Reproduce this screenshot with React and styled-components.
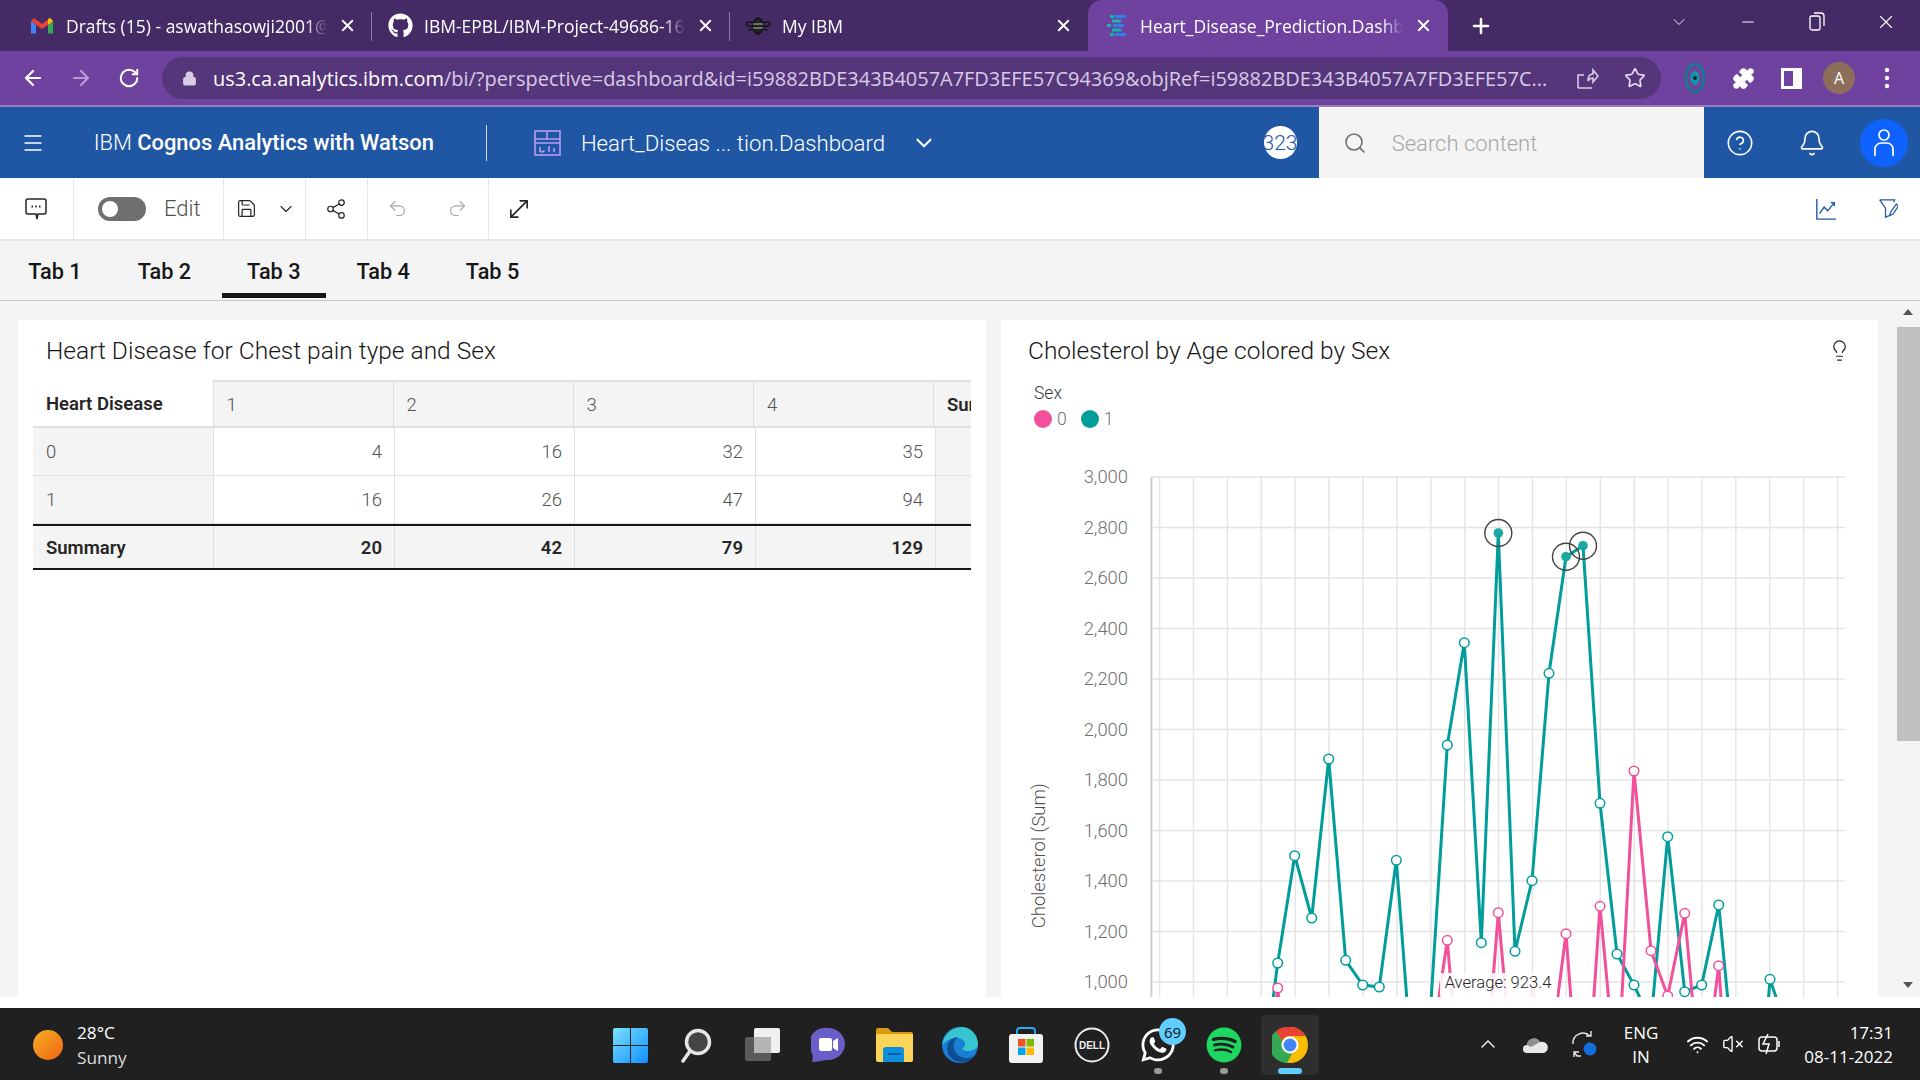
import React from "react";
import styled, { createGlobalStyle } from "styled-components";
import {
  ArrowLeft,
  ArrowRight,
  Bell,
  ChevronDown,
  ChevronUp,
  CircleHelp,
  Lightbulb,
  Lock,
  Menu,
  Minus,
  MoveDiagonal,
  Plus,
  Puzzle,
  Redo2,
  RotateCw,
  Save,
  Search,
  Share2,
  Star,
  Undo2,
  VolumeX,
  Wifi,
  X,
} from "lucide-react";
import { FaGithub, FaSpotify, FaWhatsapp } from "react-icons/fa";

const plex = `Roboto, "Noto Sans", sans-serif`;
const segoe = `"Open Sans", "Noto Sans", sans-serif`;

const GlobalStyle = createGlobalStyle`
  html, body { margin: 0; padding: 0; height: 100%; overflow: hidden; background: #fff; }
  * { box-sizing: border-box; }
`;

const Page = styled.div`
  width: 1920px;
  height: 1080px;
  display: flex;
  flex-direction: column;
  overflow: hidden;
  font-family: ${plex};
`;

/* browser chrome */
const TabStrip = styled.div`
  height: 51px;
  flex: none;
  background: #452b66;
  display: flex;
  padding-left: 14px;
  color: #fff;
  font-family: ${segoe};
`;

const BrowserTab = styled.div`
  position: relative;
  width: ${(p) => (p.$active ? "359.5px" : "358px")};
  display: flex;
  align-items: center;
  padding: 0 15px 0 15px;
  gap: 11px;
  font-size: 17.5px;
  background: ${(p) => (p.$active ? "#6f42a0" : "transparent")};
  border-radius: ${(p) => (p.$active ? "14px 14px 0 0" : "0")};
  &::after {
    content: "";
    display: ${(p) => (p.$sep ? "block" : "none")};
    position: absolute;
    right: 0;
    top: 12px;
    height: 29px;
    width: 1px;
    background: #8a77a3;
  }
`;

const TabIcon = styled.span`
  width: 26px;
  flex: none;
  display: flex;
  justify-content: center;
`;

const TabLabel = styled.span`
  flex: 1;
  white-space: nowrap;
  overflow: hidden;
  -webkit-mask-image: linear-gradient(to right, #000 92%, transparent);
  mask-image: linear-gradient(to right, #000 92%, transparent);
`;

const NewTab = styled.span`
  width: 66px;
  display: flex;
  align-items: center;
  justify-content: center;
`;

const WindowControls = styled.div`
  margin-left: auto;
  display: flex;
  align-items: flex-start;
`;

const WindowButton = styled.span`
  width: 69px;
  height: 44px;
  display: flex;
  align-items: center;
  justify-content: center;
`;

const AddressBar = styled.div`
  height: 56px;
  flex: none;
  background: #6f42a0;
  border-bottom: 2px solid #9a7cc0;
  display: flex;
  align-items: center;
  padding-left: 8.5px;
  color: #fff;
  font-family: ${segoe};
`;

const Slot = styled.span`
  width: ${(p) => p.$w || 48}px;
  flex: none;
  display: flex;
  align-items: center;
  justify-content: center;
  color: ${(p) => p.$color || "inherit"};
`;

const Omnibox = styled.div`
  width: 1499px;
  height: 42px;
  margin: 0 10px 0 9.5px;
  flex: none;
  border-radius: 21px;
  background: #56367a;
  display: flex;
  align-items: center;
  padding: 0 2px 0 3px;
`;

const Url = styled.div`
  flex: 1;
  font-size: 19.96px;
  white-space: nowrap;
  overflow: hidden;
  color: #d8cbe6;
  b {
    font-weight: 400;
    color: #fff;
  }
`;

const Avatar = styled.span`
  width: 32px;
  height: 32px;
  border-radius: 50%;
  background: #8d6e5a;
  font-size: 16px;
  display: flex;
  align-items: center;
  justify-content: center;
`;

/* cognos header */
const AppHeader = styled.header`
  height: 71px;
  flex: none;
  background: #1f57a4;
  color: #fff;
  display: flex;
  align-items: center;
`;

const Brand = styled.div`
  margin-left: 27.7px;
  font-size: 21.9px;
  font-weight: 300;
  white-space: nowrap;
  b {
    font-weight: 500;
  }
`;

const HeaderDivider = styled.span`
  width: 1px;
  height: 36px;
  margin: 0 47px 0 52px;
  background: #d0dcec;
`;

const DashTitle = styled.div`
  margin-left: 20px;
  font-size: 22.2px;
  font-weight: 300;
  white-space: nowrap;
`;

const CountBadge = styled.span`
  width: 33px;
  height: 33px;
  margin-left: auto;
  border-radius: 50%;
  background: #fff;
  color: #1f57a4;
  font-size: 21px;
  font-weight: 300;
  overflow: hidden;
  display: flex;
  align-items: center;
  justify-content: center;
`;

const SearchBox = styled.div`
  width: 385px;
  height: 71px;
  margin-left: 22.5px;
  padding-top: 1px;
  background: #f4f4f4;
  color: #a8a8a8;
  font-size: 22px;
  font-weight: 300;
  display: flex;
  align-items: center;
`;

const SearchGlass = styled(Slot)`
  margin-right: 0.7px;
  color: #6f6f6f;
`;

const UserCircle = styled.span`
  width: 48px;
  height: 48px;
  border-radius: 50%;
  background: #0f62fe;
  display: flex;
  align-items: center;
  justify-content: center;
`;

/* toolbar */
const Toolbar = styled.div`
  height: 63px;
  flex: none;
  background: #fff;
  border-bottom: 2px solid #e6e6e6;
  display: flex;
  color: #262626;
`;

const ToolSection = styled.div`
  width: ${(p) => p.$w}px;
  flex: none;
  display: flex;
  align-items: center;
  justify-content: ${(p) => p.$justify || "center"};
  border-right: ${(p) => (p.$open ? "none" : "1px solid #e6e6e6")};
  padding-left: ${(p) => p.$pad || 0}px;
`;

const Toggle = styled.span`
  width: 48px;
  height: 24px;
  border-radius: 12px;
  background: #6f6f6f;
  padding: 4px;
  display: flex;
  &::before {
    content: "";
    width: 16px;
    height: 16px;
    border-radius: 50%;
    background: #fff;
  }
`;

const EditLabel = styled.span`
  margin-left: 18px;
  font-size: 22px;
  font-weight: 300;
  color: #525252;
`;

const ToolRight = styled.div`
  margin-left: auto;
  padding-right: 1px;
  display: flex;
  color: #1f57a4;
`;

/* dashboard tabs */
const TabsBar = styled.nav`
  height: 60px;
  flex: none;
  background: #f4f4f4;
  border-bottom: 1px solid #c6c6c6;
  padding-left: 3px;
  display: flex;
  gap: 5.4px;
`;

const DashTab = styled.span`
  width: 104px;
  height: 57px;
  padding-top: 9px;
  font-size: 21.7px;
  font-weight: 500;
  color: #161616;
  display: flex;
  align-items: center;
  justify-content: center;
  border-bottom: 5px solid ${(p) => (p.$active ? "#161616" : "transparent")};
`;

/* content */
const Content = styled.main`
  flex: 1;
  min-height: 0;
  background: #f4f4f4;
  display: flex;
  padding: 19px 0 0 18px;
  gap: 15px;
  overflow: hidden;
`;

const Panel = styled.section`
  width: ${(p) => p.$w}px;
  flex: none;
  background: #fff;
  overflow: hidden;
  display: flex;
  flex-direction: column;
`;

const PanelHead = styled.div`
  height: 60px;
  flex: none;
  padding: 0 27px 0 ${(p) => p.$left}px;
  display: flex;
  align-items: center;
  justify-content: space-between;
`;

const PanelTitle = styled.h2`
  margin: 0;
  font-size: 24.5px;
  font-weight: 300;
  color: #161616;
`;

const PivotTable = styled.div`
  margin: 0 15px;
  overflow: hidden;
`;

const PivotRow = styled.div`
  display: grid;
  grid-template-columns: ${(p) => p.$cols};
  height: ${(p) => p.$h}px;
  width: 1100px;
  border-top: ${(p) => p.$top || "none"};
  border-bottom: ${(p) => p.$bottom || "none"};
`;

const Cell = styled.div`
  display: flex;
  align-items: center;
  justify-content: ${(p) => (p.$num ? "flex-end" : "flex-start")};
  padding: 1px 12px 0 13px;
  font-size: 18.5px;
  font-weight: ${(p) => (p.$bold ? 600 : 300)};
  color: ${(p) => (p.$bold ? "#262626" : "#525252")};
  background: ${(p) => (p.$shade ? "#f4f4f4" : "#fff")};
  border-right: 1px solid #e0e0e0;
`;

const HeadCell = styled(Cell)`
  padding-top: 2px;
  background: ${(p) => (p.$plain ? "#fff" : "#f4f4f4")};
  border-top: ${(p) => (p.$plain ? "none" : "2px solid #e0e0e0")};
  border-bottom: 2px solid #e0e0e0;
`;

const Legend = styled.div`
  height: 70px;
  flex: none;
  padding: 3px 0 0 33px;
  font-size: 17.5px;
  line-height: 20px;
  font-weight: 300;
  color: #393939;
`;

const LegendItems = styled.div`
  margin-top: 6px;
  display: flex;
  align-items: center;
  gap: 5px;
  color: #6f6f6f;
`;

const LegendDot = styled.span`
  width: 18px;
  height: 18px;
  border-radius: 50%;
  background: ${(p) => p.$color};
  margin-left: ${(p) => p.$gap || 0}px;
`;

const ChartSvg = styled.svg`
  display: block;
  flex: none;
`;

const Scrollbar = styled.div`
  margin-left: 4px;
  width: 23px;
  flex: none;
  position: relative;
  margin-top: -19px;
  padding-top: 26px;
  display: flex;
  flex-direction: column;
  align-items: stretch;
`;

const ScrollThumb = styled.div`
  height: 414px;
  background: #c0c0c0;
`;

const ScrollArrow = styled.span`
  position: absolute;
  left: 6px;
  ${(p) => (p.$up ? "top: 8px;" : "bottom: 9px;")}
  border-left: 5.5px solid transparent;
  border-right: 5.5px solid transparent;
  ${(p) => (p.$up ? "border-bottom" : "border-top")}: 6px solid #555;
`;

const WhiteBand = styled.div`
  height: 11px;
  flex: none;
  background: #fff;
`;

/* windows taskbar */
const Taskbar = styled.footer`
  height: 72px;
  flex: none;
  background: #202020;
  color: #fff;
  display: grid;
  grid-template-columns: 1fr auto 1fr;
  align-items: center;
  font-family: ${segoe};
`;

const Weather = styled.div`
  display: flex;
  align-items: center;
  padding: 2px 0 0 33px;
  gap: 14px;
`;

const Sun = styled.span`
  width: 30px;
  height: 30px;
  border-radius: 50%;
  background: linear-gradient(135deg, #f5b025, #f0640f);
`;

const WeatherText = styled.div`
  font-size: 17.2px;
  line-height: 25px;
  color: #ddd;
  strong {
    display: block;
    font-weight: 400;
    color: #fff;
  }
`;

const TaskIcons = styled.div`
  display: flex;
`;

const TaskIcon = styled.span`
  position: relative;
  width: 66px;
  height: 72px;
  padding-top: 2px;
  display: flex;
  align-items: center;
  justify-content: center;
  &::before {
    content: "";
    display: ${(p) => (p.$current ? "block" : "none")};
    position: absolute;
    left: 4px;
    right: 4px;
    top: 7px;
    bottom: 5px;
    border-radius: 5px;
    background: #2e2e2e;
  }
  svg {
    position: relative;
  }
`;

const RunDot = styled.span`
  position: absolute;
  bottom: 6px;
  left: 50%;
  transform: translateX(-50%);
  width: ${(p) => (p.$current ? 24 : 8)}px;
  height: 6px;
  border-radius: 3px;
  background: ${(p) => (p.$current ? "#60cdff" : "#9a9a9a")};
`;

const UnreadBadge = styled.span`
  position: absolute;
  top: 10px;
  right: 5px;
  width: 27px;
  height: 27px;
  border-radius: 50%;
  background: #60cdff;
  color: #111;
  font-size: 15px;
  display: flex;
  align-items: center;
  justify-content: center;
`;

const Tray = styled.div`
  display: flex;
  align-items: center;
  justify-content: flex-end;
  padding-right: 27px;
`;

const TwoLines = styled.div`
  font-size: 17px;
  line-height: 24px;
  padding-top: 1px;
  text-align: ${(p) => p.$align};
  margin: ${(p) => p.$margin};
`;

const axisValues = [3000, 2800, 2600, 2400, 2200, 2000, 1800, 1600, 1400, 1200, 1000];
const yOf = (v) => 477 + (3000 - v) * 0.2525;
const vLines = Array.from({ length: 21 }, (_, i) => 1159.6 + i * 33.9);

const teal = [
  [1260.7, 1094], [1277.7, 963], [1294.7, 855.7], [1311.7, 918], [1328.7, 759],
  [1345.7, 960.3], [1362.7, 985], [1379.3, 987], [1396.3, 860.3], [1413.4, 1085],
  [1430.4, 1011], [1447.3, 745], [1464.3, 642.7], [1481.3, 942.7], [1498.3, 533],
  [1515, 951.3], [1532, 880.7], [1549, 673.3], [1566, 556.7], [1583, 545.7],
  [1600, 803.3], [1617, 954], [1634, 985], [1651, 1022], [1667.7, 836.7],
  [1684.7, 991.7], [1701.7, 985], [1718.7, 905], [1735.7, 1080], [1752.7, 1200],
  [1770, 979.3], [1787, 1030],
];

const pink = [
  [1260.7, 1150], [1277.7, 988], [1294.7, 1150], [1430.3, 1056], [1447.3, 940.3],
  [1464.3, 1146], [1481.3, 1130], [1498.3, 912.7], [1515.3, 1103], [1532, 985],
  [1549, 1065], [1566, 933.7], [1583, 1158], [1600, 906.3], [1617, 1088],
  [1634, 771], [1651, 950.7], [1667.7, 996], [1684.7, 913.3], [1701.7, 1101],
  [1718.7, 965.7], [1735.7, 1200],
];

const hotspots = [1498.3, 1566, 1583];
const TEAL = "#009d9a";
const PINK = "#f1509a";

const pts = (list) => list.map((p) => p.join(",")).join(" ");

const CholesterolChart = () => (
  <ChartSvg width="877" height="547" viewBox="1001 450 877 547">
    {axisValues.map((v) => (
      <g key={v}>
        <line x1="1151" x2="1845" y1={yOf(v)} y2={yOf(v)} stroke="#e4e4e4" strokeWidth="1.6" />
        <text x="1128" y={yOf(v) + 6} textAnchor="end" fontSize="18.4" fontWeight="300" fill="#6f6f6f" fontFamily={plex}>
          {v.toLocaleString("en-US")}
        </text>
      </g>
    ))}
    {vLines.map((x) => (
      <line key={x} x1={x} x2={x} y1="477" y2="997" stroke="#e4e4e4" strokeWidth="1.4" />
    ))}
    <line x1="1151.4" x2="1151.4" y1="477" y2="997" stroke="#cfcfcf" strokeWidth="2" />
    <text
      transform="translate(1045 855.7) rotate(-90)"
      textAnchor="middle"
      fontSize="18.4"
      fontWeight="300"
      fill="#525252"
      fontFamily={plex}
    >
      Cholesterol (Sum)
    </text>
    <polyline points={pts(teal)} fill="none" stroke={TEAL} strokeWidth="3" strokeLinejoin="round" />
    <polyline points={pts(pink)} fill="none" stroke={PINK} strokeWidth="3" strokeLinejoin="round" />
    {teal.map(([x, y]) =>
      hotspots.includes(x) ? (
        <g key={x}>
          <circle cx={x} cy={y} r="4.8" fill="#1aa8a0" />
          <circle cx={x} cy={y} r="13.5" fill="none" stroke="#444" strokeWidth="1.4" />
        </g>
      ) : (
        <circle key={x} cx={x} cy={y} r="4.8" fill="#fff" stroke={TEAL} strokeWidth="1.5" />
      )
    )}
    {pink.map(([x, y]) => (
      <circle key={x} cx={x} cy={y} r="4.8" fill="#fff" stroke={PINK} strokeWidth="1.5" />
    ))}
    <rect x="1440" y="973" width="117" height="24" rx="2" fill="#fff" fillOpacity="0.88" />
    <text x="1498" y="988" textAnchor="middle" fontSize="16.6" fill="#262626" fontFamily={plex} fontWeight="300">
      Average: 923.4
    </text>
  </ChartSvg>
);

const GmailIcon = () => (
  <svg width="24" height="18" viewBox="0 0 24 18">
    <path d="M1 4v12.5h5V8z" fill="#4285f4" />
    <path d="M18 8v8.500h5V4z" fill="#34a853" />
    <path d="M1 4l11 8 11-8-3-3-8 6-8-6z" fill="#ea4335" />
    <path d="M18 2l2-1 3 3-5 4z" fill="#fbbc04" />
  </svg>
);

const BeeIcon = () => (
  <svg width="26" height="22" viewBox="0 0 26 22" fill="none" stroke="#111" strokeWidth="1.4">
    <ellipse cx="13" cy="11" rx="5" ry="8" fill="#222" />
    <path d="M8 8c-4-2-7-1-7 1s4 3 7 2M18 8c4-2 7-1 7 1s-4 3-7 2M9 14c-3 0-5 1-5 2M17 14c3 0 5 1 5 2" />
    <path d="M8 9h10M8 13h10" stroke="#888" />
  </svg>
);

const CognosTabIcon = () => (
  <svg width="24" height="24" viewBox="0 0 24 24">
    <g fill="#14b8a6">
      <rect x="6" y="1" width="4" height="3" />
      <rect x="3" y="10" width="4" height="3" />
      <rect x="6" y="19" width="4" height="3" />
    </g>
    <g fill="#2f80ed">
      <rect x="11" y="1" width="11" height="3" />
      <rect x="9" y="10" width="11" height="3" />
      <rect x="11" y="19" width="11" height="3" />
    </g>
    <g fill="#14b8a6">
      <rect x="8" y="5.500" width="9" height="3" />
      <rect x="8" y="14.500" width="9" height="3" />
    </g>
  </svg>
);

const DashIcon = () => (
  <svg width="27" height="26" viewBox="0 0 27 26" fill="none" stroke="#b79cf0" strokeWidth="1.6">
    <rect x="1" y="1" width="25" height="24" />
    <path d="M1 9h25M13 1v8M1 13h25" />
    <path d="M6 17v3a2 2 0 0 0 4 0M15 16v6M20 18v4" />
  </svg>
);

const RestoreIcon = () => (
  <svg width="16" height="20" viewBox="0 0 16 20" fill="none" stroke="#fff" strokeWidth="1.3">
    <rect x="1" y="4" width="10" height="14" rx="2" />
    <path d="M5 1h7a3 3 0 0 1 3 3v10" />
  </svg>
);

const ShareBoxIcon = () => (
  <svg width="24" height="24" viewBox="0 0 24 24" fill="none" stroke="#d8cbe6" strokeWidth="1.6">
    <path d="M3 22h14M3 22V9h6M13 15c0-5 2-7 5-7V4l5 6-5 6v-4c-2 0-4 1-5 3z" />
  </svg>
);

const ExtensionEye = () => (
  <svg width="20" height="32" viewBox="0 0 20 32">
    <ellipse cx="10" cy="16" rx="9" ry="14" fill="none" stroke="#0f7f8c" strokeWidth="2.5" />
    <ellipse cx="10" cy="16" rx="4.500" ry="7" fill="#0f9aa8" />
    <circle cx="10" cy="16" r="2" fill="#123" />
  </svg>
);

const SidePanelIcon = () => (
  <svg width="21" height="21" viewBox="0 0 21 21">
    <rect x="1.500" y="1.500" width="18" height="18" fill="none" stroke="#fff" strokeWidth="3" />
    <rect x="12" y="2" width="7" height="17" fill="#fff" />
  </svg>
);

const DotsIcon = () => (
  <svg width="6" height="22" viewBox="0 0 6 22" fill="#fff">
    <circle cx="3" cy="3" r="2.200" />
    <circle cx="3" cy="11" r="2.200" />
    <circle cx="3" cy="19" r="2.200" />
  </svg>
);

const UserIcon = () => (
  <svg width="20" height="28" viewBox="0 0 20 28" fill="none" stroke="#fff" strokeWidth="1.700">
    <circle cx="10" cy="6" r="5" />
    <path d="M1 27v-8a7 7 0 0 1 7-5h4a7 7 0 0 1 7 5v8" />
  </svg>
);

const CommentIcon = () => (
  <svg width="22" height="22" viewBox="0 0 22 22" fill="none" stroke="currentColor" strokeWidth="1.5">
    <path d="M3 1h16a2 2 0 0 1 2 2v11a2 2 0 0 1-2 2h-6l-1 5-1-5H3a2 2 0 0 1-2-2V3a2 2 0 0 1 2-2z" />
    <path d="M6.500 8.500h1.500M10.300 8.500h1.500M14 8.500h1.500" strokeWidth="2.200" />
  </svg>
);

const TrendIcon = () => (
  <svg width="22" height="22" viewBox="0 0 22 24" fill="none" stroke="currentColor" strokeWidth="1.500">
    <path d="M1 1v22h21M4 17l5-7 4 4 7-9M16 5h4v4" />
  </svg>
);

const FilterEditIcon = () => (
  <svg width="20" height="20" viewBox="0 0 22 24" fill="none" stroke="currentColor" strokeWidth="1.500">
    <path d="M1 1h18l-1 3M1 1l7 10v11l4-2M21 6l-7 10-1 4 4-2 6-9z" />
  </svg>
);

const WindowsLogo = () => (
  <svg width="35" height="35" viewBox="0 0 35 35">
    <defs>
      <linearGradient id="win" x1="0" y1="0" x2="1" y2="1">
        <stop offset="0" stopColor="#7be2ff" />
        <stop offset="1" stopColor="#0f8fff" />
      </linearGradient>
    </defs>
    <path d="M0 2a2 2 0 0 1 2-2h15v17H0zM18 0h15a2 2 0 0 1 2 2v15H18zM0 18h17v17H2a2 2 0 0 1-2-2zM18 18h17v15a2 2 0 0 1-2 2H18z" fill="url(#win)" />
  </svg>
);

const SearchTaskIcon = () => (
  <svg width="32" height="35" viewBox="0 0 32 35" fill="#444" stroke="#e6e6e6" strokeWidth="3.500">
    <circle cx="18" cy="14" r="11.500" />
    <path d="M10 23l-7 10" strokeLinecap="round" />
  </svg>
);

const TaskViewIcon = () => (
  <svg width="36" height="34" viewBox="0 0 36 34">
    <rect x="1" y="9" width="26" height="24" rx="2" fill="#5a5a5a" />
    <rect x="10" y="0" width="26" height="25" rx="2" fill="#f0f0f0" />
    <rect x="10" y="9" width="17" height="16" fill="#b5b5b5" />
  </svg>
);

const MeetIcon = () => (
  <svg width="34" height="34" viewBox="0 0 34 34">
    <path d="M17 0a17 16 0 0 1 0 32c-4 0-10 2-16 2 1-3 1-5 0-9a17 16 0 0 1 16-25z" fill="#6a5fc8" />
    <rect x="8" y="10" width="13" height="13" rx="2" fill="#fff" />
    <path d="M22 13l5-3v13l-5-3z" fill="#fff" />
  </svg>
);

const FolderIcon = () => (
  <svg width="37" height="34" viewBox="0 0 37 34">
    <path d="M0 2a2 2 0 0 1 2-2h10l4 4h19a2 2 0 0 1 2 2v3H0z" fill="#d99a10" />
    <path d="M0 6h37v26a2 2 0 0 1-2 2H2a2 2 0 0 1-2-2z" fill="#fcd45a" />
    <path d="M7 22a3 3 0 0 1 3-3h15a3 3 0 0 1 3 3v12H7z" fill="#0d8fdc" />
    <rect x="12" y="25" width="13" height="2" fill="#0a5fa8" />
  </svg>
);

const EdgeIcon = () => (
  <svg width="36" height="36" viewBox="0 0 36 36">
    <circle cx="18" cy="18" r="18" fill="#1a7fd4" />
    <path d="M0 18C2 6 12 0 20 0c9 0 16 8 16 17 0 5-5 7-10 7-4 0-6-2-6-3 3-1 4-4 2-7-4-5-14-5-22 4z" fill="#37c6d0" />
    <path d="M8 30c-6-8-2-19 8-20-5 4-6 10-2 16 4 5 12 7 18 3-5 7-16 9-24 1z" fill="#0f4d92" />
  </svg>
);

const StoreIcon = () => (
  <svg width="36" height="36" viewBox="0 0 36 36">
    <path d="M9 7V4a3 3 0 0 1 3-3h12a3 3 0 0 1 3 3v3" fill="none" stroke="#26a8f0" strokeWidth="2" />
    <rect x="1" y="7" width="34" height="29" rx="3" fill="#f2f2f2" />
    <rect x="10" y="12" width="7.500" height="7.500" fill="#f25022" />
    <rect x="18.500" y="12" width="7.500" height="7.500" fill="#7fba00" />
    <rect x="10" y="20.500" width="7.500" height="7.500" fill="#00a4ef" />
    <rect x="18.500" y="20.500" width="7.500" height="7.500" fill="#ffb900" />
  </svg>
);

const DellIcon = () => (
  <svg width="36" height="36" viewBox="0 0 36 36">
    <circle cx="18" cy="18" r="16.500" fill="none" stroke="#eee" strokeWidth="2" />
    <text x="18" y="21.500" textAnchor="middle" fontSize="10" fontWeight="700" fill="#eee" fontFamily="Liberation Sans, sans-serif">
      DELL
    </text>
  </svg>
);

const ChromeIcon = () => (
  <svg width="36" height="36" viewBox="0 0 36 36">
    <circle cx="18" cy="18" r="18" fill="#fbbc04" />
    <path d="M18 0a18 18 0 0 1 15.600 9H18a9 9 0 0 0-8 5L4 4a18 18 0 0 1 14-4z" fill="#ea4335" />
    <path d="M4 4l8.500 14A9 9 0 0 0 20 27l-5 9A18 18 0 0 1 4 4z" fill="#34a853" />
    <circle cx="18" cy="18" r="8.500" fill="#fff" />
    <circle cx="18" cy="18" r="6.500" fill="#4285f4" />
  </svg>
);

const CloudIcon = () => (
  <svg width="25" height="20" viewBox="0 0 25 20">
    <path d="M4 19a4 4 0 0 1 0-8 7 7 0 0 1 13-3 5.500 5.500 0 0 1 4 11z" fill="#e8e8e8" />
    <path d="M4 11a7 7 0 0 1 13-3L8 13z" fill="#8f8f8f" />
  </svg>
);

const SyncIcon = () => (
  <svg width="26" height="28" viewBox="0 0 26 28" fill="none" stroke="#e8e8e8" strokeWidth="1.400">
    <path d="M2 14a10 10 0 0 1 17-8M20 1v5h-5M3 22l3 4h4M3 27v-5h5" />
    <circle cx="19" cy="19" r="6.500" fill="#0f6fde" stroke="none" />
  </svg>
);

const BatteryIcon = () => (
  <svg width="26" height="24" viewBox="0 0 26 24" fill="none" stroke="#fff" strokeWidth="1.500">
    <rect x="3" y="5" width="18" height="14" rx="3" />
    <path d="M23 9v6M12 2L7 12h6l-3 10" />
  </svg>
);

const ValueCols = "180.5px 181.5px 180px 181px 180px 200px";
const HeadCols = "180.5px 180px 180px 180.5px 180px 200px";

const rows = [
  ["0", 4, 16, 32, 35],
  ["1", 16, 26, 47, 94],
];

const App = () => (
  <Page>
    <GlobalStyle />
    <TabStrip>
      <BrowserTab $sep>
        <TabIcon><GmailIcon /></TabIcon>
        <TabLabel>Drafts (15) - aswathasowji2001@g</TabLabel>
        <X size={19} strokeWidth={2.4} />
      </BrowserTab>
      <BrowserTab $sep>
        <TabIcon><FaGithub size={25} /></TabIcon>
        <TabLabel>IBM-EPBL/IBM-Project-49686-16</TabLabel>
        <X size={19} strokeWidth={2.4} />
      </BrowserTab>
      <BrowserTab>
        <TabIcon><BeeIcon /></TabIcon>
        <TabLabel>My IBM</TabLabel>
        <X size={19} strokeWidth={2.4} />
      </BrowserTab>
      <BrowserTab $active>
        <TabIcon><CognosTabIcon /></TabIcon>
        <TabLabel>Heart_Disease_Prediction.Dashbo</TabLabel>
        <X size={19} strokeWidth={2.4} />
      </BrowserTab>
      <NewTab><Plus size={24} strokeWidth={2.5} /></NewTab>
      <WindowControls>
        <WindowButton><ChevronDown size={20} strokeWidth={1.1} /></WindowButton>
        <WindowButton><Minus size={18} strokeWidth={1.3} /></WindowButton>
        <WindowButton><RestoreIcon /></WindowButton>
        <WindowButton><X size={22} strokeWidth={1.2} /></WindowButton>
      </WindowControls>
    </TabStrip>

    <AddressBar>
      <Slot><ArrowLeft size={24} strokeWidth={2.2} /></Slot>
      <Slot $color="#b79cd8"><ArrowRight size={24} strokeWidth={2.2} /></Slot>
      <Slot><RotateCw size={22} strokeWidth={2.2} /></Slot>
      <Omnibox>
        <Slot $w={48} $color="#d8cbe6"><Lock size={15} strokeWidth={2.5} fill="#d8cbe6" /></Slot>
        <Url>
          <b>us3.ca.analytics.ibm.com</b>/bi/?perspective=dashboard&amp;id=i59882BDE343B4057A7FD3EFE57C94369&amp;objRef=i59882BDE343B4057A7FD3EFE57C...
        </Url>
        <Slot><ShareBoxIcon /></Slot>
        <Slot $color="#e6dcf0"><Star size={22} strokeWidth={1.8} /></Slot>
      </Omnibox>
      <Slot><ExtensionEye /></Slot>
      <Slot><Puzzle size={23} fill="#fff" strokeWidth={1.5} /></Slot>
      <Slot><SidePanelIcon /></Slot>
      <Slot><Avatar>A</Avatar></Slot>
      <Slot><DotsIcon /></Slot>
    </AddressBar>

    <AppHeader>
      <Slot $w={66}><Menu size={24} strokeWidth={1.4} /></Slot>
      <Brand>IBM <b>Cognos Analytics with Watson</b></Brand>
      <HeaderDivider />
      <Slot $w={27}><DashIcon /></Slot>
      <DashTitle>Heart_Diseas ... tion.Dashboard</DashTitle>
      <Slot $w={78}><ChevronDown size={26} strokeWidth={2} /></Slot>
      <CountBadge>323</CountBadge>
      <SearchBox>
        <SearchGlass $w={72}><Search size={24} strokeWidth={1.6} /></SearchGlass>
        Search content
      </SearchBox>
      <Slot $w={72}><CircleHelp size={28} strokeWidth={1.4} /></Slot>
      <Slot $w={72}><Bell size={28} strokeWidth={1.4} /></Slot>
      <Slot $w={72}><UserCircle><UserIcon /></UserCircle></Slot>
    </AppHeader>

    <Toolbar>
      <ToolSection $w={73.5}><CommentIcon /></ToolSection>
      <ToolSection $w={150} $justify="flex-start" $pad={24.5}>
        <Toggle />
        <EditLabel>Edit</EditLabel>
      </ToolSection>
      <ToolSection $w={82}>
        <Slot $w={44}><Save size={21} strokeWidth={1.4} /></Slot>
        <Slot $w={36}><ChevronDown size={20} strokeWidth={1.3} /></Slot>
      </ToolSection>
      <ToolSection $w={62}><Share2 size={22} strokeWidth={1.3} /></ToolSection>
      <ToolSection $w={121.500}>
        <Slot $w={60} $color="#a8a8a8"><Undo2 size={21} strokeWidth={1.3} /></Slot>
        <Slot $w={60} $color="#a8a8a8"><Redo2 size={21} strokeWidth={1.3} /></Slot>
      </ToolSection>
      <ToolSection $w={60} $open><MoveDiagonal size={28} strokeWidth={1.4} /></ToolSection>
      <ToolRight>
        <Slot $w={62}><TrendIcon /></Slot>
        <Slot $w={62}><FilterEditIcon /></Slot>
      </ToolRight>
    </Toolbar>

    <TabsBar>
      {["Tab 1", "Tab 2", "Tab 3", "Tab 4", "Tab 5"].map((t) => (
        <DashTab key={t} $active={t === "Tab 3"}>{t}</DashTab>
      ))}
    </TabsBar>

    <Content>
      <Panel $w={968}>
        <PanelHead $left={28}>
          <PanelTitle>Heart Disease for Chest pain type and Sex</PanelTitle>
        </PanelHead>
        <PivotTable>
          <PivotRow $cols={HeadCols} $h={48}>
            <HeadCell $plain $bold>Heart Disease</HeadCell>
            {["1", "2", "3", "4"].map((c) => <HeadCell key={c}>{c}</HeadCell>)}
            <HeadCell $bold>Summary</HeadCell>
          </PivotRow>
          {rows.map(([label, ...vals]) => (
            <PivotRow key={label} $cols={ValueCols} $h={48} $bottom="1px solid #e0e0e0">
              <Cell $shade>{label}</Cell>
              {vals.map((v, i) => <Cell key={i} $num>{v}</Cell>)}
              <Cell $shade />
            </PivotRow>
          ))}
          <PivotRow $cols={ValueCols} $h={46} $top="2px solid #161616" $bottom="2px solid #161616">
            <Cell $shade $bold>Summary</Cell>
            {[20, 42, 79, 129].map((v) => <Cell key={v} $shade $bold $num>{v}</Cell>)}
            <Cell $shade />
          </PivotRow>
        </PivotTable>
      </Panel>

      <Panel $w={877}>
        <PanelHead $left={27}>
          <PanelTitle>Cholesterol by Age colored by Sex</PanelTitle>
          <Lightbulb size={23} strokeWidth={1.3} color="#262626" />
        </PanelHead>
        <Legend>
          Sex
          <LegendItems>
            <LegendDot $color={PINK} />0
            <LegendDot $color={TEAL} $gap={9} />1
          </LegendItems>
        </Legend>
        <CholesterolChart />
      </Panel>

      <Scrollbar>
        <ScrollArrow $up />
        <ScrollThumb />
        <ScrollArrow />
      </Scrollbar>
    </Content>

    <WhiteBand />

    <Taskbar>
      <Weather>
        <Sun />
        <WeatherText><strong>28°C</strong>Sunny</WeatherText>
      </Weather>
      <TaskIcons>
        <TaskIcon><WindowsLogo /></TaskIcon>
        <TaskIcon><SearchTaskIcon /></TaskIcon>
        <TaskIcon><TaskViewIcon /></TaskIcon>
        <TaskIcon><MeetIcon /></TaskIcon>
        <TaskIcon><FolderIcon /></TaskIcon>
        <TaskIcon><EdgeIcon /></TaskIcon>
        <TaskIcon><StoreIcon /></TaskIcon>
        <TaskIcon><DellIcon /></TaskIcon>
        <TaskIcon>
          <FaWhatsapp size={38} color="#fff" />
          <UnreadBadge>69</UnreadBadge>
          <RunDot />
        </TaskIcon>
        <TaskIcon>
          <FaSpotify size={36} color="#1ed760" />
          <RunDot />
        </TaskIcon>
        <TaskIcon $current>
          <ChromeIcon />
          <RunDot $current />
        </TaskIcon>
      </TaskIcons>
      <Tray>
        <Slot $w={48}><ChevronUp size={24} strokeWidth={1.4} /></Slot>
        <Slot $w={48}><CloudIcon /></Slot>
        <Slot $w={48}><SyncIcon /></Slot>
        <TwoLines $align="center" $margin="0 21px 0 16px">ENG<br />IN</TwoLines>
        <Slot $w={36}><Wifi size={23} strokeWidth={2} /></Slot>
        <Slot $w={36}><VolumeX size={22} strokeWidth={1.5} /></Slot>
        <Slot $w={36}><BatteryIcon /></Slot>
        <TwoLines $align="right" $margin="0 0 0 17px">17:31<br />08-11-2022</TwoLines>
      </Tray>
    </Taskbar>
  </Page>
);

export default App;
